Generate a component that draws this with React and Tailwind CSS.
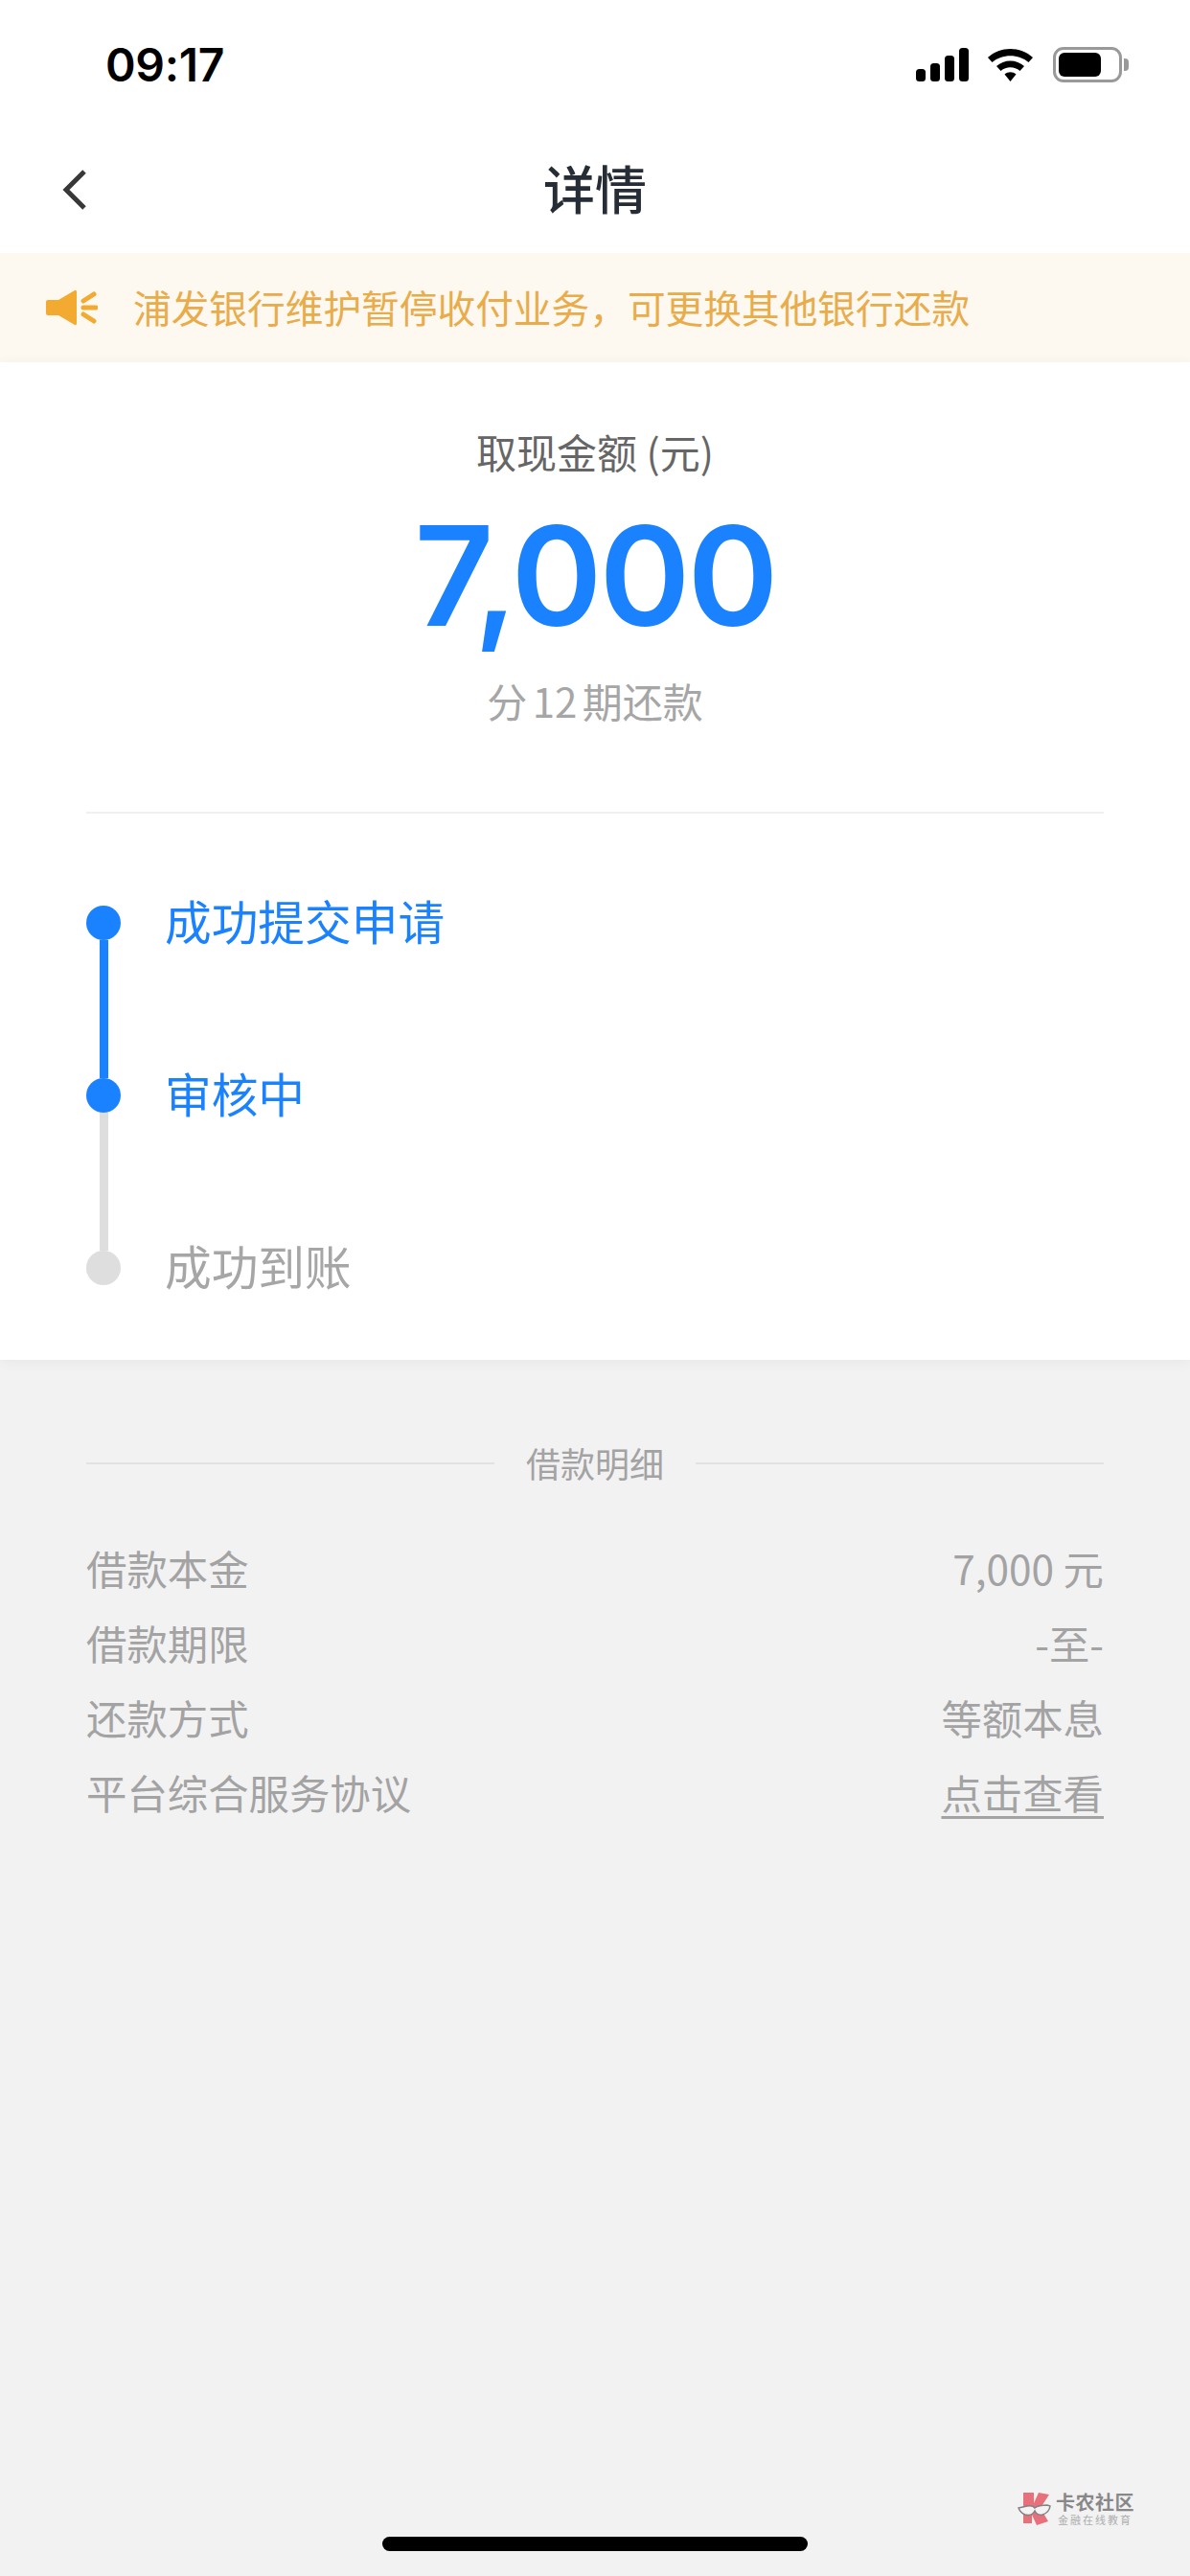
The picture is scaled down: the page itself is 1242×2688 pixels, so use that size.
const cjk = "font-['Noto_Sans_CJK_SC','Noto_Sans',sans-serif]";

function StatusIcons() {
  return (
    <div className="flex items-center">
      <svg width="56" height="36" viewBox="0 0 56 36" className="block">
        <rect x="0" y="22" width="10" height="13" rx="3.5" fill="#000" />
        <rect x="15" y="16" width="10" height="19" rx="3.5" fill="#000" />
        <rect x="30" y="8" width="10" height="27" rx="3.5" fill="#000" />
        <rect x="45" y="0" width="10" height="35" rx="3.5" fill="#000" />
      </svg>
      <svg width="50" height="36" viewBox="0 0 50 36" className="block ml-[18px]">
        <path d="M1 10 C14 -2 35 -2 48 10 L43.5 15 C33 6 16 6 5.500 15 Z" fill="#000" />
        <path d="M10 19 C18 11.500 31 11.500 39 19 L34.500 24 C28.500 19 20.500 19 14.500 24 Z" fill="#000" />
        <path d="M18.500 27.500 C22 24.500 27 24.500 30.500 27.500 L24.500 35 Z" fill="#000" />
      </svg>
      <div className="ml-[19px] flex items-center">
        <div className="w-[72px] h-[37px] rounded-[11px] border-[3px] border-[#999999] p-[3px] box-border">
          <div className="w-[44px] h-full rounded-[6px] bg-black" />
        </div>
        <div className="ml-[2px] w-[5px] h-[13px] rounded-r-[4px] bg-[#999999]" />
      </div>
    </div>
  );
}

function Step({ label, active, line, lineActive }) {
  return (
    <div className="flex h-[180px]">
      <div className="w-[36px] flex flex-col items-center">
        <div className={`w-[36px] h-[36px] rounded-full shrink-0 ${active ? "bg-[#1a82ff]" : "bg-[#dedede]"}`} />
        {line && <div className={`w-[9px] h-[144px] ${lineActive ? "bg-[#1a82ff]" : "bg-[#dedede]"}`} />}
      </div>
      <div className={`ml-[46px] h-[36px] pb-[5px] flex items-center text-[48.7px] leading-none ${active ? "text-[#1a82ff]" : "text-[#a6a6a6]"}`}>
        {label}
      </div>
    </div>
  );
}

function Row({ left, right, underline }) {
  return (
    <div className="flex justify-between items-center h-[78px] pb-[4px] text-[42.4px] leading-none text-[#a3a3a3]">
      <span>{left}</span>
      <span className={underline ? "underline underline-offset-[7px] decoration-[3px]" : ""}>{right}</span>
    </div>
  );
}

export default function App() {
  return (
    <div className={`relative w-[1242px] h-[2688px] overflow-hidden bg-[#f2f2f3] flex flex-col ${cjk}`}>
      <div className="bg-white">
        <div className="h-[132px] pt-[3px] pl-[110px] pr-[64px] flex items-center justify-between">
          <span className="text-[48px] font-semibold leading-none text-black font-['Inter',sans-serif] tracking-[-0.3px]">09:17</span>
          <StatusIcons />
        </div>
        <div className="relative h-[132px] pb-[5px] flex items-center justify-center">
          <svg width="30" height="44" viewBox="0 0 30 44" className="absolute left-[63px] top-[44px]">
            <path d="M25 3 L6 22 L25 41" fill="none" stroke="#383838" strokeWidth="5" />
          </svg>
          <span className="text-[54px] font-medium leading-none text-[#262d36]">详情</span>
        </div>
        <div className="h-[114px] bg-[#fdf8f0] flex items-center pl-[48px]">
          <svg width="54" height="38" viewBox="0 0 54 38" className="block">
            <path d="M2 11 H13 L30 1 Q32 0 32 3 V35 Q32 38 30 37 L13 27 H2 Q0 27 0 25 V13 Q0 11 2 11 Z" fill="#f2ab30" />
            <path d="M39 12 L50 5 M39 19 H52 M39 26 L50 33" fill="none" stroke="#f2ab30" strokeWidth="5" strokeLinecap="round" />
          </svg>
          <span className="ml-[37px] pb-[3px] text-[39.7px] leading-none text-[#e9ac4b]">浦发银行维护暂停收付业务，可更换其他银行还款</span>
        </div>
        <div className="px-[90px] shadow-[0_2px_14px_rgba(0,0,0,0.05)]">
          <div className="h-[471px] border-b-2 border-[#f0f0f2] flex flex-col items-center">
            <div className="mt-[72px] text-[42px] leading-none text-[#666666]">取现金额 (元)</div>
            <div className="mt-[37px] text-[144px] leading-none font-semibold text-[#1a82ff] font-['Inter',sans-serif] tracking-[-3px]">7,000</div>
            <div className="mt-[37px] text-[42px] leading-none text-[#a6a6a6] [word-spacing:-4px]">分 12 期还款</div>
          </div>
          <div className="pt-[96px] h-[570px]">
            <Step label="成功提交申请" active line lineActive />
            <Step label="审核中" active line />
            <Step label="成功到账" />
          </div>
        </div>
      </div>

      <div className="px-[90px] pt-[90px]">
        <div className="flex items-center justify-between h-[36px]">
          <div className="w-[426px] h-[2px] bg-[#e2e2e5]" />
          <span className="pb-[3px] text-[36px] leading-none text-[#a3a3a3]">借款明细</span>
          <div className="w-[426px] h-[2px] bg-[#e2e2e5]" />
        </div>
        <div className="mt-[54px]">
          <Row left="借款本金" right="7,000 元" />
          <Row left="借款期限" right="-至-" />
          <Row left="还款方式" right="等额本息" />
          <Row left="平台综合服务协议" right="点击查看" underline />
        </div>
      </div>

      <div className="flex-1" />
      <div className="flex justify-center pb-[26px]">
        <div className="w-[444px] h-[15px] rounded-full bg-black" />
      </div>

      <div className="absolute left-[1062px] top-[2600px] flex items-center opacity-90">
        <svg width="36" height="36" viewBox="0 0 36 36" className="block">
          <path d="M6 1 H17 V12 L22 1 L33 3 L24 17 L32 31 L20 35 L15 24 V33 H6 Z" fill="#e8636f" />
          <path d="M1 17 L10 15 Q16 14 18 17 Q22 14 31 14 L34 15 Q33 22 26 24 Q20 25 18 20 Q15 26 8 24 Q3 22 1 17 Z" fill="#f4f4f4" stroke="#777777" strokeWidth="1.500" />
        </svg>
        <div className="ml-[4px] flex flex-col items-center">
          <span className="text-[20px] leading-[22px] font-bold text-[#7d7d7d] tracking-[0.5px]">卡农社区</span>
          <span className="text-[11px] leading-[14px] text-[#a6a6a6] tracking-[2px]">金融在线教育</span>
        </div>
      </div>
    </div>
  );
}
